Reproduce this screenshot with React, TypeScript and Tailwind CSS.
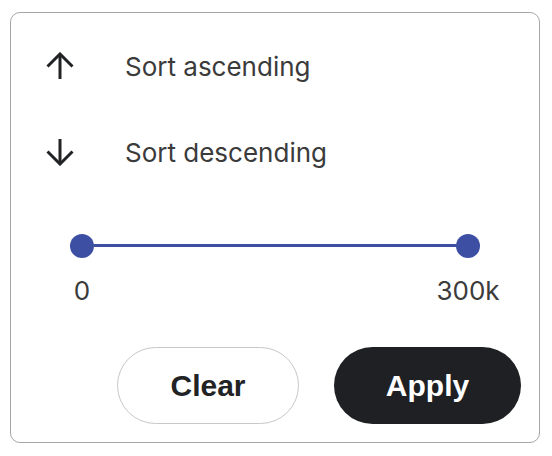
import React from 'react';

const Arrow: React.FC<{ down?: boolean }> = ({ down }) => (
  <svg
    width="28"
    height="28"
    viewBox="0 0 28 28"
    fill="none"
    stroke="#222325"
    strokeWidth="3"
    className={down ? 'rotate-180' : ''}
    aria-hidden="true"
  >
    <path d="M14 27V2" />
    <path d="M1.5 14.5L14 2L26.5 14.5" />
  </svg>
);

const SortRow: React.FC<{ label: string; down?: boolean }> = ({ label, down }) => (
  <div className="flex h-[86px] items-center">
    <div className="w-[114px] pl-[35px]">
      <Arrow down={down} />
    </div>
    <span className="text-[26px] text-[#3b3b3b]">{label}</span>
  </div>
);

const Thumb: React.FC<{ label: string }> = ({ label }) => (
  <div className="flex w-[24px] flex-col items-center">
    <div className="h-[24px] w-[24px] rounded-full bg-[#3d4fa3]" />
    <span className="mt-[19px] whitespace-nowrap text-[26px] leading-[28px] text-[#3b3b3b]">
      {label}
    </span>
  </div>
);

export default function App() {
  return (
    <div className="h-[456px] w-[552px] bg-white pl-[10px] pt-[12px]" style={{ fontFamily: 'Inter, sans-serif' }}>
      <div className="h-[431px] w-[530px] rounded-[10px] border border-[#a6a6a6] pt-[10px]">
        <SortRow label="Sort ascending" />
        <SortRow label="Sort descending" down />

        {/* Range slider */}
        <div className="mt-[39px] flex items-start px-[59px]">
          <Thumb label="0" />
          <div className="mt-[10px] h-[3px] flex-1 bg-[#3d4fa3]" />
          <Thumb label="300k" />
        </div>

        {/* Actions */}
        <div
          className="mt-[42px] flex justify-end gap-[35px] pr-[18px]"
          style={{ fontFamily: '"Liberation Sans", Arial, sans-serif' }}
        >
          <button className="h-[77px] w-[182px] rounded-full border border-[#c8c8c8] bg-white text-[30px] font-bold text-[#222325]">
            Clear
          </button>
          <button className="h-[77px] w-[187px] rounded-full bg-[#1f2023] text-[30px] font-bold text-white">
            Apply
          </button>
        </div>
      </div>
    </div>
  );
}
